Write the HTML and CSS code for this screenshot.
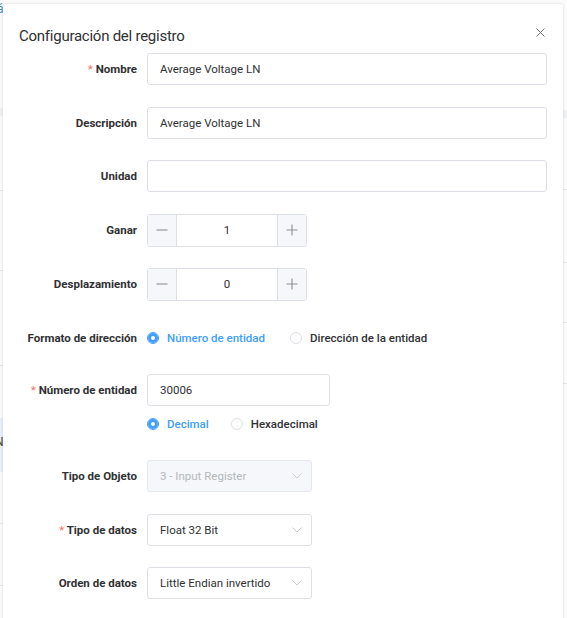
FILE: index.html
```html
<!DOCTYPE html>
<html lang="es">
<head>
<meta charset="utf-8">
<link rel="stylesheet" href="styles.css">
</head>
<body>
<div class="page">
  <div class="bg-table">
    <div class="bg-head">á</div>
  </div>
  <div class="bg-lines">
    <div class="bl bl1"></div>
    <div class="bl bl2"></div>
    <div class="bl bl3"></div>
    <div class="bl bl4"></div>
    <div class="bl-blue"><span>N</span></div>
    <div class="bl bl5"></div>
    <div class="bl bl6"></div>
  </div>
  <div class="bg-lines-r">
    <div class="br br0"></div>
    <div class="br br1"></div>
    <div class="br br2"></div>
    <div class="br br3"></div>
    <div class="br br4"></div>
  </div>

  <div class="dialog">
    <div class="dialog-header">
      <span class="dialog-title">Configuración del registro</span>
      <span class="close">
        <svg width="9" height="9" viewBox="0 0 9 9"><path d="M0.5 0.5 L8.5 8.5 M8.5 0.5 L0.5 8.5" stroke="#6f7277" stroke-width="1" fill="none"/></svg>
      </span>
    </div>
    <form class="form">
      <div class="row">
        <label class="label"><span class="req">*</span> Nombre</label>
        <div class="control"><div class="input wide">Average Voltage LN</div></div>
      </div>
      <div class="row m21">
        <label class="label">Descripción</label>
        <div class="control"><div class="input wide">Average Voltage LN</div></div>
      </div>
      <div class="row">
        <label class="label">Unidad</label>
        <div class="control"><div class="input wide"></div></div>
      </div>
      <div class="row">
        <label class="label">Ganar</label>
        <div class="control">
          <div class="stepper">
            <span class="step-btn minus"><svg width="12" height="12" viewBox="0 0 12 12"><path d="M0.5 6 H11.5" stroke="#8c8f94" stroke-width="1.1"/></svg></span>
            <span class="step-val">1</span>
            <span class="step-btn plus"><svg width="12" height="12" viewBox="0 0 12 12"><path d="M0.5 6 H11.5 M6 0.5 V11.5" stroke="#8c8f94" stroke-width="1.1"/></svg></span>
          </div>
        </div>
      </div>
      <div class="row">
        <label class="label">Desplazamiento</label>
        <div class="control">
          <div class="stepper">
            <span class="step-btn minus"><svg width="12" height="12" viewBox="0 0 12 12"><path d="M0.5 6 H11.5" stroke="#8c8f94" stroke-width="1.1"/></svg></span>
            <span class="step-val">0</span>
            <span class="step-btn plus"><svg width="12" height="12" viewBox="0 0 12 12"><path d="M0.5 6 H11.5 M6 0.5 V11.5" stroke="#8c8f94" stroke-width="1.1"/></svg></span>
          </div>
        </div>
      </div>
      <div class="row m20">
        <label class="label">Formato de dirección</label>
        <div class="control radios">
          <span class="radio checked"><span class="dot"></span>Número de entidad</span>
          <span class="radio"><span class="dot"></span>Dirección de la entidad</span>
        </div>
      </div>
      <div class="row m2">
        <label class="label"><span class="req">*</span> Número de entidad</label>
        <div class="control"><div class="input mid">30006</div></div>
      </div>
      <div class="row m20">
        <label class="label"></label>
        <div class="control radios narrow-gap">
          <span class="radio checked"><span class="dot"></span>Decimal</span>
          <span class="radio"><span class="dot"></span>Hexadecimal</span>
        </div>
      </div>
      <div class="row">
        <label class="label">Tipo de Objeto</label>
        <div class="control">
          <div class="input select disabled">3 - Input Register<svg class="arrow" width="10" height="6" viewBox="0 0 10 6"><path d="M0.5 0.5 L5 5 L9.5 0.5" stroke="#c8cbd0" stroke-width="1" fill="none"/></svg></div>
        </div>
      </div>
      <div class="row m21">
        <label class="label"><span class="req">*</span> Tipo de datos</label>
        <div class="control">
          <div class="input select">Float 32 Bit<svg class="arrow" width="10" height="6" viewBox="0 0 10 6"><path d="M0.5 0.5 L5 5 L9.5 0.5" stroke="#c8cbd0" stroke-width="1" fill="none"/></svg></div>
        </div>
      </div>
      <div class="row">
        <label class="label">Orden de datos</label>
        <div class="control">
          <div class="input select">Little Endian invertido<svg class="arrow" width="10" height="6" viewBox="0 0 10 6"><path d="M0.5 0.5 L5 5 L9.5 0.5" stroke="#c8cbd0" stroke-width="1" fill="none"/></svg></div>
        </div>
      </div>
    </form>
  </div>
</div>
</body>
</html>
```

FILE: styles.css
```css
* { box-sizing: border-box; }
html, body {
  margin: 0;
  padding: 0;
  width: 567px;
  height: 618px;
  overflow: hidden;
  background: #ffffff;
  font-family: Roboto, "Liberation Sans", sans-serif;
}
.page {
  position: relative;
  width: 567px;
  height: 618px;
  background: #fbfbfb;
}
.bg-head {
  position: absolute;
  left: -3px;
  top: 2px;
  font-size: 12px;
  color: #4a90d9;
}
.bg-lines { position: absolute; left: 0; top: 0; width: 4px; height: 618px; }
.bl { position: absolute; left: 0; width: 4px; height: 1px; background: #e4e6ea; }
.bl1 { top: 108px; height: 8px; background: #f0f1f3; }
.bl2 { top: 190px; }
.bl3 { top: 270px; }
.bl4 { top: 365px; }
.bl5 { top: 523px; }
.bl6 { top: 585px; }
.bl-blue {
  position: absolute; left: 0; top: 418px; width: 4px; height: 54px; background: #e6f0fb;
  overflow: hidden;
}
.bl-blue span { position: absolute; left: -5px; top: 17px; font-size: 12px; color: #444; }
.bg-lines-r { position: absolute; right: 0; top: 0; width: 4px; height: 618px; }
.br { position: absolute; right: 0; width: 4px; height: 1px; background: #e4e6ea; }
.br0 { top: 110px; height: 8px; background: #f0f1f3; }
.br1 { top: 189px; }
.br2 { top: 262px; }
.br3 { top: 322px; }
.br4 { top: 383px; }

.dialog {
  position: absolute;
  left: 3px;
  top: 4px;
  width: 560px;
  height: 640px;
  background: #fff;
  border-radius: 2px;
  box-shadow: 0 0 3px rgba(0,0,0,0.14);
}
.dialog-header {
  display: flex;
  justify-content: space-between;
  align-items: center;
  padding: 20px 18px 0 16px;
  height: 44px;
}
.dialog-title {
  font-size: 15px;
  letter-spacing: -0.25px;
  color: #303133;
  line-height: 20px;
}
.close { display: flex; margin-top: -7px; }
.form { padding: 5px 16px 0 16px; }
.row {
  display: flex;
  align-items: center;
  height: 32px;
  margin-bottom: 22px;
}
.m21 { margin-bottom: 21px; }
.m20 { margin-bottom: 20px; }
.m2 { margin-bottom: 2px; }
.label {
  width: 128px;
  padding-right: 10px;
  text-align: right;
  font-size: 11.5px;
  font-weight: 700;
  color: #303133;
  flex: none;
}
.req { color: #f56c6c; font-weight: 400; }
.control { flex: 1; display: flex; align-items: center; }
.input {
  height: 32px;
  border: 1px solid #dcdfe6;
  border-radius: 3px;
  padding: 0 12px;
  display: flex;
  align-items: center;
  font-size: 11.5px;
  color: #303133;
  background: #fff;
}
.wide { width: 400px; }
.mid { width: 183px; }
.select { width: 165px; justify-content: space-between; padding-right: 9px; }
.disabled { background: #f5f7fa; color: #b4b7bd; border-color: #e4e7ed; }
.stepper {
  width: 160px;
  height: 33px;
  display: flex;
  border: 1px solid #dcdfe6;
  border-radius: 3px;
}
.step-btn {
  width: 29px;
  background: #f5f7fa;
  display: flex;
  align-items: center;
  justify-content: center;
}
.minus { border-right: 1px solid #dcdfe6; }
.plus { border-left: 1px solid #dcdfe6; }
.step-val {
  flex: 1;
  display: flex;
  align-items: center;
  justify-content: center;
  font-size: 11.5px;
  color: #303133;
}
.radios { gap: 25px; }
.narrow-gap { gap: 22px; }
.radio {
  display: flex;
  align-items: center;
  font-size: 11.5px;
  color: #303133;
  font-weight: 500;
}
.radio .dot {
  width: 12px;
  height: 12px;
  border-radius: 50%;
  border: 1px solid #dcdfe6;
  margin-right: 8px;
  background: #fff;
}
.radio.checked { color: #409eff; }
.radio.checked .dot {
  border: 1px solid #409eff;
  background: #fff;
  box-shadow: inset 0 0 0 3px #409eff;
}
```
